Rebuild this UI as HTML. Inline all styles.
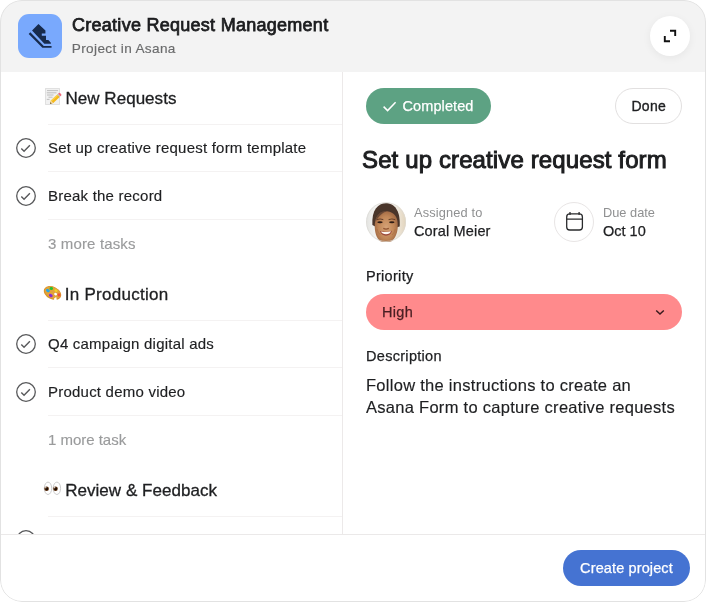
<!DOCTYPE html>
<html>
<head>
<meta charset="utf-8">
<style>
*{box-sizing:border-box;margin:0;padding:0}
html,body{width:706px;height:602px;background:#fff;overflow:hidden}
body{font-family:"Liberation Sans",sans-serif;color:#1e1f21;position:relative}
.card{position:absolute;left:0;top:0;width:706px;height:602px;border-radius:22px;overflow:hidden;background:#fff;will-change:transform}
.frame{position:absolute;left:0;top:0;width:706px;height:602px;border:1px solid #e2e2e2;border-radius:22px;pointer-events:none}
.abs{position:absolute;white-space:nowrap}
.hdr{position:absolute;left:0;top:0;width:706px;height:72px;background:#f3f3f3}
.icon{position:absolute;left:18px;top:14px;width:44px;height:44px;border-radius:11px;background:#79a9fd}
.title{left:72px;top:13px;font-size:18px;font-weight:normal;line-height:24px;color:#1e1f21;letter-spacing:0.27px;-webkit-text-stroke:0.75px #1a1b1d}
.sub{left:71.8px;top:40px;font-size:13.6px;line-height:18px;color:#6a6b6c;letter-spacing:0.36px;-webkit-text-stroke:0.15px #6a6b6c}
.exp{position:absolute;left:650px;top:16px;width:40px;height:40px;border-radius:20px;background:#fff;box-shadow:0 2px 8px rgba(0,0,0,0.06)}
.vline{position:absolute;left:342px;top:72px;width:1px;height:462px;background:#ece9e9}
.sep{position:absolute;left:48px;width:294px;height:1px;background:#f4f2f2}
.sec{left:65.5px;font-size:17px;font-weight:normal;line-height:24px;color:#1e1f21;-webkit-text-stroke:0.3px #1e1f21;letter-spacing:0.1px}
.task{left:48px;font-size:15px;line-height:20px;color:#1e1f21;letter-spacing:0.22px;-webkit-text-stroke:0.15px #1e1f21}
.more{left:48px;font-size:15px;line-height:20px;color:#9a9b9c;letter-spacing:0.15px;-webkit-text-stroke:0.15px #9a9b9c}
.chk{position:absolute;left:16px;width:20px;height:20px}
.foot{position:absolute;left:0;top:534px;width:706px;height:68px;background:#fff;border-top:1px solid #ebe9e9}
.btn{position:absolute;left:563px;top:550px;width:127px;height:36px;border-radius:18px;background:#4573d2;color:#fff;font-size:14.5px;line-height:36px;text-align:center;-webkit-text-stroke:0.25px #fff;letter-spacing:0.12px}
.pill{position:absolute;left:366px;top:88px;width:125px;height:36px;border-radius:18px;background:#5da283}
.done{position:absolute;left:615px;top:88px;width:67px;height:36px;border-radius:18px;background:#fff;border:1px solid #e2e0e0;font-size:14px;line-height:34px;text-align:center;color:#1e1f21;-webkit-text-stroke:0.35px #1e1f21;letter-spacing:0.3px;padding-left:0.5px}
.h1{left:362px;top:144px;font-size:24px;font-weight:normal;line-height:32px;color:#1e1f21;letter-spacing:0.12px;-webkit-text-stroke:0.95px #1a1b1d}
.lbl{font-size:12.8px;line-height:16px;color:#8f9091}
.val{font-size:14.5px;line-height:20px;color:#1e1f21;-webkit-text-stroke:0.25px #1e1f21}
.flab{font-size:14.5px;line-height:18px;color:#1e1f21;letter-spacing:0.3px;-webkit-text-stroke:0.25px #1e1f21}
.sel{position:absolute;left:366px;top:294px;width:316px;height:36px;border-radius:18px;background:#ff8a8c}
.desc{left:366px;font-size:16.5px;line-height:22px;color:#1e1f21;letter-spacing:0.28px;-webkit-text-stroke:0.15px #1e1f21}
.cal{position:absolute;left:554px;top:202px;width:40px;height:40px;border-radius:20px;border:1px solid #e8e5e5;background:#fff}
.ava{position:absolute;left:366px;top:202px;width:40px;height:40px;border-radius:20px;overflow:hidden}
</style>
</head>
<body>
<div class="card">
  <div class="hdr"></div>
  <div class="icon">
    <svg width="44" height="44" viewBox="0 0 44 44">
      <path d="M20.47 9.95 L14.05 16.6 L26.37 29.63 L32.88 29.63 L32.88 28.7 L30.33 25.9 L28 25.9 L28 21.7 L23.8 21.7 L23.8 19.5 L27.44 19.5 L27.44 16.6 Z" fill="#172b4d"/>
      <path d="M12.3 18.3 L25.75 31.95 L33.55 31.95 L33.55 33.7 L24.4 33.7 L10.7 19.95 Z" fill="#172b4d"/>
    </svg>
  </div>
  <div class="abs title">Creative Request Management</div>
  <div class="abs sub">Project in Asana</div>
  <div class="exp">
    <svg width="40" height="40" viewBox="0 0 40 40"><path d="M20 14.8 H25.2 V20 M14.8 20 V25.2 H20" fill="none" stroke="#111" stroke-width="1.9"/></svg>
  </div>

  <!-- left list -->
  <div class="vline"></div>
  <svg class="abs" style="left:43px;top:86px" width="20" height="22" viewBox="43 86 20 22">
    <rect x="45" y="88" width="15" height="17" rx="0.8" fill="#dcdcdc"/>
    <rect x="45.8" y="88.8" width="13.4" height="15.4" fill="#f1f1f1"/>
    <path d="M47 90.6 H58 M46.8 92.8 H56.5 M47 95 H53.5 M48.5 97.2 H52.5 M46.8 99.4 H49.5" stroke="#b9b9b9" stroke-width="0.9" fill="none"/>
    <path d="M50 103.9 L50.9 100.6 L57.6 94.2 L60 96.7 L53.3 103.1 Z" fill="#f5b91b"/>
    <path d="M50.9 100.6 L57.6 94.2 L58.5 95.1 L51.6 101.6 Z" fill="#fbd24e"/>
    <path d="M50 103.9 L50.5 102 L51.8 103.4 Z" fill="#6b5a45"/>
    <path d="M50.5 102 L50.9 100.6 L53.3 103.1 L51.8 103.4 Z" fill="#f1d7a6"/>
    <path d="M57.2 94.6 L58 93.8 L60.4 96.3 L59.6 97.1 Z" fill="#b9c4cf"/>
    <path d="M58 93.8 L58.9 93 Q59.6 92.5 60.3 93.2 L61.2 94.2 Q61.8 95 61.2 95.6 L60.4 96.3 Z" fill="#ee6b7c"/>
  </svg>
  <div class="abs sec" style="top:87px;letter-spacing:0.03px">New Requests</div>
  <div class="sep" style="top:124px"></div>
  <svg class="chk" style="top:138px" viewBox="0 0 20 20"><circle cx="10" cy="10" r="9.3" fill="none" stroke="#58595b" stroke-width="1.3"/><path d="M5.3 10.5 L8.05 13.3 L13.9 7.2" fill="none" stroke="#58595b" stroke-width="1.4"/></svg>
  <div class="abs task" style="top:138px">Set up creative request form template</div>
  <div class="sep" style="top:171px"></div>
  <svg class="chk" style="top:186px" viewBox="0 0 20 20"><circle cx="10" cy="10" r="9.3" fill="none" stroke="#58595b" stroke-width="1.3"/><path d="M5.3 10.5 L8.05 13.3 L13.9 7.2" fill="none" stroke="#58595b" stroke-width="1.4"/></svg>
  <div class="abs task" style="top:186px">Break the record</div>
  <div class="sep" style="top:219px"></div>
  <div class="abs more" style="top:234px">3 more tasks</div>
  <svg class="abs" style="left:42px;top:283px" width="22" height="20" viewBox="42 283 22 20">
    <g transform="rotate(27 52.5 293)">
      <ellipse cx="52.5" cy="293" rx="9.2" ry="6.3" fill="#d8922c"/>
      <ellipse cx="52.5" cy="292.6" rx="8.4" ry="5.5" fill="#e2a33a"/>
    </g>
    <path d="M54.2 298.2 L56.2 297 L57 300.8 L54 300.8 Z" fill="#fff"/>
    <ellipse cx="55.6" cy="294.1" rx="1.5" ry="1.2" fill="#fff" transform="rotate(27 55.6 294.1)"/>
    <ellipse cx="47.9" cy="290.6" rx="2" ry="1.5" fill="#27a7e6" transform="rotate(30 47.9 290.6)"/>
    <ellipse cx="51.3" cy="288.5" rx="1.8" ry="1.5" fill="#2bc133" transform="rotate(20 51.3 288.5)"/>
    <ellipse cx="56" cy="290.6" rx="1.6" ry="1.3" fill="#f4d321" transform="rotate(30 56 290.6)"/>
    <ellipse cx="59" cy="294.9" rx="1.5" ry="1.6" fill="#f0503a" transform="rotate(-30 59 294.9)"/>
    <ellipse cx="50.8" cy="295.6" rx="2" ry="1.5" fill="#8a2bd6" transform="rotate(30 50.8 295.6)"/>
  </svg>
  <div class="abs sec" style="top:283px;left:64.8px;letter-spacing:0.27px">In Production</div>
  <div class="sep" style="top:320px"></div>
  <svg class="chk" style="top:334px" viewBox="0 0 20 20"><circle cx="10" cy="10" r="9.3" fill="none" stroke="#58595b" stroke-width="1.3"/><path d="M5.3 10.5 L8.05 13.3 L13.9 7.2" fill="none" stroke="#58595b" stroke-width="1.4"/></svg>
  <div class="abs task" style="top:334px">Q4 campaign digital ads</div>
  <div class="sep" style="top:367px"></div>
  <svg class="chk" style="top:382px" viewBox="0 0 20 20"><circle cx="10" cy="10" r="9.3" fill="none" stroke="#58595b" stroke-width="1.3"/><path d="M5.3 10.5 L8.05 13.3 L13.9 7.2" fill="none" stroke="#58595b" stroke-width="1.4"/></svg>
  <div class="abs task" style="top:382px">Product demo video</div>
  <div class="sep" style="top:415px"></div>
  <div class="abs more" style="top:430px;letter-spacing:-0.02px">1 more task</div>
  <svg class="abs" style="left:42px;top:479px" width="22" height="19" viewBox="42 479 22 19">
    <ellipse cx="48" cy="488.3" rx="3.7" ry="6.2" fill="#fff" stroke="#c6c6c6" stroke-width="0.9"/>
    <ellipse cx="56.9" cy="488.3" rx="3.7" ry="6.2" fill="#fff" stroke="#c6c6c6" stroke-width="0.9"/>
    <circle cx="46.6" cy="488.8" r="2.3" fill="#5a2d0c"/>
    <circle cx="55.5" cy="488.8" r="2.3" fill="#5a2d0c"/>
    <circle cx="46.8" cy="488.9" r="1.3" fill="#1d0d04"/>
    <circle cx="55.7" cy="488.9" r="1.3" fill="#1d0d04"/>
    <circle cx="45.8" cy="487.7" r="0.6" fill="#fff"/>
    <circle cx="54.7" cy="487.7" r="0.6" fill="#fff"/>
  </svg>
  <div class="abs sec" style="top:479px;left:65.2px;letter-spacing:0.04px">Review &amp; Feedback</div>
  <div class="sep" style="top:516px"></div>
  <svg class="chk" style="top:530px" viewBox="0 0 20 20"><circle cx="10" cy="10" r="9.3" fill="none" stroke="#58595b" stroke-width="1.3"/><path d="M5.3 10.5 L8.05 13.3 L13.9 7.2" fill="none" stroke="#58595b" stroke-width="1.4"/></svg>

  <div class="abs task" style="top:531px">Social media banner kit</div>

  <!-- right -->
  <div class="pill"><svg width="125" height="36" viewBox="0 0 125 36"><path d="M17.6 18.6 L21.6 22.6 L29.6 14.3" fill="none" stroke="#fff" stroke-width="1.5"/></svg></div>
  <div class="abs" style="left:402.5px;top:96px;font-size:14.5px;line-height:20px;color:#fff;-webkit-text-stroke:0.25px #fff;letter-spacing:0.1px">Completed</div>
  <div class="done">Done</div>
  <div class="abs h1">Set up creative request form</div>
  <div class="ava"><svg width="40" height="40" viewBox="0 0 40 40">
    <defs>
      <filter id="b1" x="-20%" y="-20%" width="140%" height="140%"><feGaussianBlur stdDeviation="0.7"/></filter>
      <filter id="b2" x="-20%" y="-20%" width="140%" height="140%"><feGaussianBlur stdDeviation="0.45"/></filter>
      <linearGradient id="bg" x1="0" y1="0" x2="1" y2="0"><stop offset="0" stop-color="#e4e4e1"/><stop offset="0.25" stop-color="#f3f3f1"/><stop offset="0.7" stop-color="#f1eee8"/><stop offset="1" stop-color="#e3d4bb"/></linearGradient>
      <radialGradient id="sk" cx="0.5" cy="0.5" r="0.62"><stop offset="0" stop-color="#d6a377"/><stop offset="0.55" stop-color="#c08657"/><stop offset="1" stop-color="#90593a"/></radialGradient>
    </defs>
    <rect width="40" height="40" fill="url(#bg)"/>
    <g filter="url(#b1)">
      <path d="M6.4 23 C5.4 8 12 1.3 20 1.3 C28 1.3 34.6 8 33.7 24.5 L28 26 L12 26 Z" fill="#49342a"/>
      <path d="M8.8 22 C9.6 13.5 14 9 21 9.2 C28.5 10 32.2 15.5 31.7 23.5 C32 30 29.5 36 26 39 L27.5 42 L12.5 42 L14 39 C10.5 36 8.3 30 8.8 22 Z" fill="url(#sk)"/>
      <path d="M9.4 20 C10 13 14 8.6 21 9 C17 10.5 12.5 14 9.4 20 Z" fill="#5b4032" opacity="0.8"/>
    </g>
    <g filter="url(#b2)">
      <ellipse cx="14" cy="20.2" rx="2.7" ry="1" fill="#2f1c13"/>
      <ellipse cx="25.8" cy="20.2" rx="2.7" ry="1" fill="#2f1c13"/>
      <path d="M10.8 17.6 Q14 16.3 17.3 17.6 M22.6 17.6 Q26 16.3 29.2 17.6" stroke="#5a3623" stroke-width="0.9" fill="none"/>
      <path d="M17.3 26.4 Q20 27.8 22.8 26.4" stroke="#8f5230" stroke-width="1.2" fill="none"/>
      <path d="M14 29 Q20 30.4 26 28.8 Q24.8 33.6 20 33.7 Q15.2 33.6 14 29 Z" fill="#9c4a3b"/>
      <path d="M15 29.5 Q20 30.8 25 29.3 Q24 32.2 20 32.3 Q16.2 32.2 15 29.5 Z" fill="#fdf6f0"/>
      <path d="M11 27 Q12 31 14.5 33 M29.3 27 Q28.3 31 26 33" stroke="#a5683f" stroke-width="0.8" fill="none" opacity="0.7"/>
    </g>
    <circle cx="20" cy="20" r="19.5" fill="none" stroke="#dcdad6" stroke-width="1" opacity="0.7"/>
  </svg></div>
  <div class="cal"><svg width="38" height="38" viewBox="0 0 38 38"><rect x="11.7" y="10.9" width="15.7" height="16.1" rx="3" fill="none" stroke="#2a2b2d" stroke-width="1.3"/><path d="M11.7 16.1 H27.4 M15 9 V12 M24.1 9 V12" fill="none" stroke="#2a2b2d" stroke-width="1.3"/></svg></div>
  <div class="abs lbl" style="left:414px;top:205px;letter-spacing:0.15px">Assigned to</div>
  <div class="abs val" style="left:414px;top:221px;letter-spacing:0.15px">Coral Meier</div>
  <div class="abs lbl" style="left:603px;top:205px">Due date</div>
  <div class="abs val" style="left:603px;top:221px">Oct 10</div>
  <div class="abs flab" style="left:366px;top:267px">Priority</div>
  <div class="sel"><svg width="316" height="36" viewBox="0 0 316 36"><path d="M290.2 16.5 L294 20 L297.8 16.5" fill="none" stroke="#3a1a1d" stroke-width="1.5"/></svg></div>
  <div class="abs" style="left:382px;top:302px;font-size:14.5px;line-height:20px;color:#4a1f23;-webkit-text-stroke:0.25px #4a1f23;letter-spacing:0.3px">High</div>
  <div class="abs flab" style="left:366px;top:347px">Description</div>
  <div class="abs desc" style="top:374px">Follow the instructions to create an</div>
  <div class="abs desc" style="top:396px">Asana Form to capture creative requests</div>

  <div class="foot"></div>
  <div class="btn">Create project</div>
  <div class="frame"></div>
</div>
</body>
</html>
